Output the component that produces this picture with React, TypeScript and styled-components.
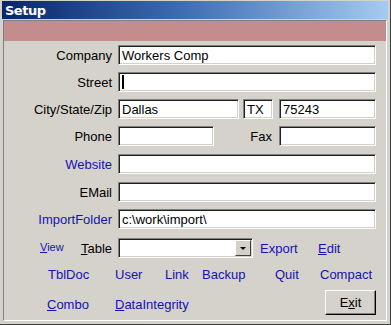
import React from "react";
import styled, { createGlobalStyle } from "styled-components";

const Global = createGlobalStyle`
  html, body { margin: 0; padding: 0; background: #d4d0c8; }
  body { font-family: "Liberation Sans", Arial, sans-serif; }
`;

const Window = styled.div`
  width: 391px;
  height: 325px;
  box-sizing: border-box;
  background: #d5d1cb;
  padding: 1px 2px 0 2px;
  display: flex;
  flex-direction: column;
  border-right: 1px solid #404040;
  border-bottom: 1px solid #404040;
`;

const TitleBar = styled.div`
  height: 18px;
  background: linear-gradient(to right, #0a246a 0%, #3a6ab0 45%, #a6caf0 100%);
  display: flex;
  align-items: center;
  padding-left: 3px;
  color: #fff;
  font: bold 13px "DejaVu Sans", Verdana, sans-serif;
  letter-spacing: -0.5px;
`;

const Client = styled.div`
  margin: 1px 1px 3px 1px;
  flex: 1;
  border-left: 1px solid #808080;
  border-top: 1px solid #808080;
  border-right: 1px solid #fff;
  border-bottom: 1px solid #fff;
  display: flex;
  flex-direction: column;
`;

const Band = styled.div`
  height: 20px;
  background: #c48c8c;
`;

const Form = styled.div`
  padding: 4px 10px 0 0;
  display: flex;
  flex-direction: column;
`;

const Row = styled.div<{ $mt?: number }>`
  display: flex;
  align-items: center;
  height: 20px;
  margin-top: ${(p) => p.$mt ?? 0}px;
`;

const Label = styled.div<{ $link?: boolean }>`
  width: 108px;
  text-align: right;
  font-size: 13px;
  color: ${(p) => (p.$link ? "#1414b0" : "#000")};
  margin-right: 6px;
  white-space: nowrap;
`;

const Field = styled.div<{ $w?: number }>`
  box-sizing: border-box;
  height: 20px;
  ${(p) => (p.$w ? `width: ${p.$w}px;` : "flex: 1;")}
  background: #fff;
  border: 1px solid;
  border-color: #808080 #fff #fff #808080;
  box-shadow: inset 1px 1px 0 #202020, inset -1px -1px 0 #d4d0c8;
  font-size: 13px;
  color: #000;
  padding: 0 0 0 3px;
  display: flex;
  align-items: center;
  white-space: nowrap;
  overflow: hidden;
`;

const Caret = styled.span`
  width: 2px;
  height: 14px;
  background: #000;
`;

const SideLabel = styled.div`
  margin-left: auto;
  margin-right: 7px;
  font-size: 13px;
  color: #000;
`;

const LabelCell = styled.div`
  width: 108px;
  margin-right: 6px;
  padding-left: 36px;
  box-sizing: border-box;
  display: flex;
  justify-content: space-between;
  align-items: center;
`;

const SmallLink = styled.span`
  font-size: 11px;
  color: #1414b0;
  margin-top: -2px;
`;

const Plain = styled.span`
  font-size: 13px;
  color: #000;
`;

const Combo = styled(Field)`
  padding-right: 1px;
  justify-content: flex-end;
`;

const DropBtn = styled.div`
  width: 16px;
  height: 16px;
  box-sizing: border-box;
  background: #d4d0c8;
  border: 1px solid;
  border-color: #fff #404040 #404040 #fff;
  display: flex;
  align-items: center;
  justify-content: center;
`;

const Arrow = styled.span`
  width: 0;
  height: 0;
  border-left: 3px solid transparent;
  border-right: 3px solid transparent;
  border-top: 3px solid #000;
`;

const Link = styled.span<{ $w?: number; $ml?: number }>`
  font-size: 13px;
  color: #1414b0;
  white-space: nowrap;
  ${(p) => (p.$w ? `width: ${p.$w}px;` : "")}
  margin-left: ${(p) => p.$ml ?? 0}px;
`;

const LinkRow = styled.div<{ $mt: number; $pl: number }>`
  display: flex;
  align-items: center;
  margin-top: ${(p) => p.$mt}px;
  padding-left: ${(p) => p.$pl}px;
`;

const ExitButton = styled.div`
  margin-left: auto;
  width: 51px;
  height: 25px;
  box-sizing: border-box;
  border: 1px solid;
  border-color: #fff #000 #000 #fff;
  box-shadow: inset -1px -1px 0 #808080;
  display: flex;
  align-items: center;
  justify-content: center;
  font-size: 13px;
  color: #000;
`;

export default function App() {
  return (
    <>
      <Global />
      <Window>
        <TitleBar>Setup</TitleBar>
        <Client>
          <Band />
          <Form>
            <Row>
              <Label>Company</Label>
              <Field>Workers Comp</Field>
            </Row>
            <Row $mt={7}>
              <Label>Street</Label>
              <Field>
                <Caret />
              </Field>
            </Row>
            <Row $mt={7}>
              <Label>City/State/Zip</Label>
              <Field $w={121}>Dallas</Field>
              <Field $w={30} style={{ marginLeft: 4 }}>TX</Field>
              <Field style={{ marginLeft: 6 }}>75243</Field>
            </Row>
            <Row $mt={7}>
              <Label>Phone</Label>
              <Field $w={96} />
              <SideLabel>Fax</SideLabel>
              <Field $w={97} />
            </Row>
            <Row $mt={8}>
              <Label $link>Website</Label>
              <Field />
            </Row>
            <Row $mt={8}>
              <Label>EMail</Label>
              <Field />
            </Row>
            <Row $mt={7}>
              <Label $link>ImportFolder</Label>
              <Field>c:\work\import\</Field>
            </Row>
            <Row $mt={9}>
              <LabelCell>
                <SmallLink>
                  <u>V</u>iew
                </SmallLink>
                <Plain>
                  <u>T</u>able
                </Plain>
              </LabelCell>
              <Combo $w={135}>
                <DropBtn>
                  <Arrow />
                </DropBtn>
              </Combo>
              <Link $ml={7} $w={58}>Export</Link>
              <Link>
                <u>E</u>dit
              </Link>
            </Row>
            <LinkRow $mt={6} $pl={44} style={{ height: 20 }}>
              <Link $w={67}>TblDoc</Link>
              <Link $w={50}>User</Link>
              <Link $w={37}>Link</Link>
              <Link $w={73}>Backup</Link>
              <Link $w={45}>Quit</Link>
              <Link>Compact</Link>
            </LinkRow>
            <LinkRow $mt={6} $pl={43}>
              <Link $w={68} style={{ marginTop: 3 }}>
                <u>C</u>ombo
              </Link>
              <Link style={{ marginTop: 3 }}>
                <u>D</u>ataIntegrity
              </Link>
              <ExitButton>
                E<u>x</u>it
              </ExitButton>
            </LinkRow>
          </Form>
        </Client>
      </Window>
    </>
  );
}
